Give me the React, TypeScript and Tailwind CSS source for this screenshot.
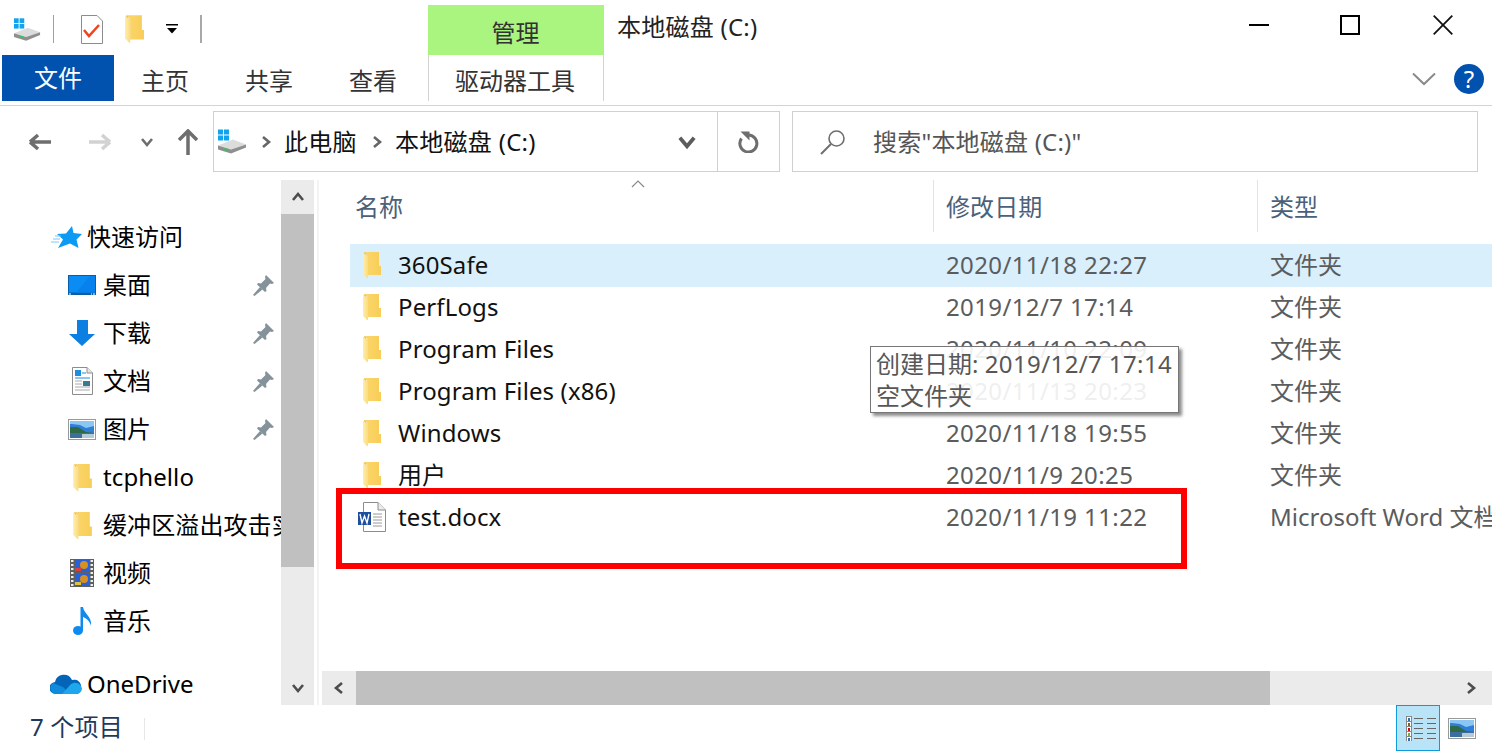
import type { ReactNode } from 'react'

function Folder({ className = 'w-[18px] h-[26px]' }: { className?: string }) {
  return (
    <svg viewBox="0 0 18 26" className={className}>
      <defs>
        <linearGradient id="folderFlap" x1="0" x2="1" y1="0" y2="0">
          <stop offset="0" stopColor="#ffeeaa" />
          <stop offset="1" stopColor="#fbdc7e" />
        </linearGradient>
        <linearGradient id="folderBody" x1="0" x2="1" y1="0" y2="0">
          <stop offset="0" stopColor="#fbd76c" />
          <stop offset="1" stopColor="#f8cd58" />
        </linearGradient>
      </defs>
      <path d="M1 0 H16 V14 H18 V23 H5 V4 Z" fill="url(#folderBody)" />
      <path d="M1 0 L3 1.500 V3 L5 4 V23 H4 Z" fill="#e9bd4b" />
      <path d="M0 0.500 L5 4.500 V26 L4 26 L0 22 Z" fill="url(#folderFlap)" />
    </svg>
  )
}

function Drive({ className = 'w-[29px] h-[24px]' }: { className?: string }) {
  return (
    <svg viewBox="0 0 29 24" className={className}>
      <rect x="0" y="0" width="5" height="5" fill="#10a4ef" />
      <rect x="6" y="0" width="5" height="5" fill="#10a4ef" />
      <rect x="0" y="6" width="5" height="5" fill="#10a4ef" />
      <rect x="6" y="6" width="5" height="5" fill="#10a4ef" />
      <path d="M0 16 L15 10 L28 15 L13 20 Z" fill="#dcdcdc" />
      <path d="M0 16 L13 20 L28 15 L28 18 L13 24 L0 20 Z" fill="#8f8f8f" />
      <rect x="6" y="19" width="4" height="2" fill="#36c45b" />
    </svg>
  )
}

function Pin() {
  return (
    <svg viewBox="0 0 21 21" className="w-[21px] h-[21px]">
      <path d="M13 0 L21 8 L19 9 L17 8.500 L13 13 L13.500 16 L12 17 L4 9.500 L5 8 L8 8.500 L12.500 4 L12 2 Z" fill="#84929b" />
      <path d="M7 12 L9.500 14.500 L1.500 21 L0 20 Z" fill="#84929b" />
    </svg>
  )
}

function Landscape({ className }: { className: string }) {
  return (
    <svg viewBox="0 0 28 21" className={className}>
      <rect x="0.500" y="0.500" width="27" height="20" fill="#fff" stroke="#999" />
      <rect x="2" y="2" width="24" height="17" fill="#2f7fd8" />
      <path d="M2 2 H26 V7 L18 9 L12 6 L4 5 L2 5 Z" fill="#8cc7f3" />
      <path d="M2 8 L10 8 L18 13 L26 14 V15 H2 Z" fill="#2f6a48" />
      <rect x="2" y="14" width="24" height="5" fill="#3c6f9e" />
      <rect x="14" y="15" width="12" height="4" fill="#b5c9d6" />
    </svg>
  )
}

const quickIcons: Record<string, ReactNode> = {
  desktop: (
    <svg viewBox="0 0 28 20" className="w-[28px] h-[20px]">
      <rect width="28" height="20" fill="#0a5ea8" />
      <rect x="1" y="1" width="26" height="16.500" fill="#0a8cf5" />
      <path d="M8 17.500 L22 1 H27 V17.500 Z" fill="#0781ee" />
      <path d="M1 19 H3 M23 19 H24 M25 19 H27" stroke="#fff" />
    </svg>
  ),
  download: (
    <svg viewBox="0 0 26 26" className="w-[26px] h-[26px]">
      <path d="M8 0 H19 V14 H26 L13 26 L0 14 H8 Z" fill="#0c7fe2" />
    </svg>
  ),
  doc: (
    <svg viewBox="0 0 21 28" className="w-[21px] h-[28px]">
      <path d="M0.500 0.500 H15 L20.500 6 V27.500 H0.500 Z" fill="#fff" stroke="#8d8d8d" />
      <path d="M15 0.500 V6 H20.500" fill="#e6e6e6" stroke="#8d8d8d" />
      <rect x="3" y="3" width="6" height="6" fill="#1b8ee0" />
      <path d="M10 6 H14 M3 11 H18" stroke="#1b8ee0" />
      <path d="M3 14 H10 M3 17 H10 M3 20 H18 M3 23 H18" stroke="#aaa" />
      <rect x="11" y="14" width="7" height="5" fill="#3d7a8f" />
    </svg>
  ),
  pictures: <Landscape className="w-[28px] h-[21px]" />,
  folder: <Folder className="w-[19px] h-[27px]" />,
  video: (
    <svg viewBox="0 0 24 28" className="w-[24px] h-[28px]">
      <rect width="24" height="28" fill="#5f5f5f" />
      <rect x="5" y="1" width="14" height="12" fill="#2860d8" />
      <rect x="5" y="15" width="14" height="12" fill="#2860d8" />
      <circle cx="14" cy="6" r="4" fill="#d89020" />
      <circle cx="14" cy="20" r="4" fill="#d89020" />
      <rect x="5" y="9" width="6" height="3" fill="#d84040" />
      <rect x="5" y="23" width="6" height="3" fill="#e0c040" />
      <path d="M1 2 H3.500 M1 6 H3.500 M1 10 H3.500 M1 14 H3.500 M1 18 H3.500 M1 22 H3.500 M1 26 H3.500 M20.500 2 H23 M20.500 6 H23 M20.500 10 H23 M20.500 14 H23 M20.500 18 H23 M20.500 22 H23 M20.500 26 H23" stroke="#eee" strokeWidth="2" />
    </svg>
  ),
  music: (
    <svg viewBox="0 0 19 28" className="w-[19px] h-[28px]">
      <ellipse cx="5" cy="23.500" rx="5" ry="4.500" fill="#0f8bef" />
      <path d="M7.500 0 H10 C11 7 19 9 18 19 C17 14 13 11 10 10 V24 H7.500 Z" fill="#0f8bef" />
    </svg>
  ),
}

const quickItems = [
  { key: 'desktop', label: '桌面', pinned: true },
  { key: 'download', label: '下载', pinned: true },
  { key: 'doc', label: '文档', pinned: true },
  { key: 'pictures', label: '图片', pinned: true },
  { key: 'folder', label: 'tcphello', pinned: false },
  { key: 'folder', label: '缓冲区溢出攻击实验', pinned: false },
  { key: 'video', label: '视频', pinned: false },
  { key: 'music', label: '音乐', pinned: false },
]

const files = [
  { name: '360Safe', date: '2020/11/18 22:27', type: '文件夹' },
  { name: 'PerfLogs', date: '2019/12/7 17:14', type: '文件夹' },
  { name: 'Program Files', date: '2020/11/10 22:09', type: '文件夹' },
  { name: 'Program Files (x86)', date: '2020/11/13 20:23', type: '文件夹' },
  { name: 'Windows', date: '2020/11/18 19:55', type: '文件夹' },
  { name: '用户', date: '2020/11/9 20:25', type: '文件夹' },
  { name: 'test.docx', date: '2020/11/19 11:22', type: 'Microsoft Word 文档' },
]

function Chevron({ dir, className = 'w-[14px] h-[14px]', color = '#4d4d4d' }: { dir: 'up' | 'down' | 'left' | 'right'; className?: string; color?: string }) {
  const d = {
    up: 'M2 10 L7 4 L12 10',
    down: 'M2 4 L7 10 L12 4',
    left: 'M10 2 L4 7 L10 12',
    right: 'M4 2 L10 7 L4 12',
  }[dir]
  return (
    <svg viewBox="0 0 14 14" className={className}>
      <path d={d} fill="none" stroke={color} strokeWidth="2.600" />
    </svg>
  )
}

function RibbonTab({ label, width }: { label: string; width: string }) {
  return <div className={`${width} h-[46px] pt-[5px] flex items-center justify-center text-[#333]`}>{label}</div>
}

export default function App() {
  return (
    <div className="relative w-[1492px] h-[752px] overflow-hidden bg-white text-[24px] leading-[32px] text-black font-['Noto_Sans','Noto_Sans_CJK_SC',sans-serif]">
      {/* Title row */}
      <div className="h-[55px] flex">
        <div className="w-[428px] flex items-center pl-[14px] pt-[3px]">
          <Drive className="w-[27px] h-[23px]" />
          <div className="ml-[12px] w-[1px] h-[28px] bg-[#a0a0a0]" />
          <svg viewBox="0 0 22 29" className="ml-[27px] w-[22px] h-[29px]">
            <path d="M0.500 0.500 H16 L21.500 6 V28.500 H0.500 Z" fill="#fff" stroke="#8d8d8d" />
            <path d="M3 15 L8 21 L18 10" fill="none" stroke="#f0441c" strokeWidth="2.500" />
          </svg>
          <Folder className="ml-[22px] w-[19px] h-[28px]" />
          <svg viewBox="0 0 12 10" className="ml-[22px] w-[12px] h-[10px]">
            <rect width="12" height="1.500" />
            <path d="M1 4 H11 L6 9.500 Z" />
          </svg>
          <div className="ml-[22px] w-[2px] h-[28px] bg-[#a8a8a8]" />
        </div>
        <div className="mt-[5px] w-[176px] bg-[#a9f580] flex items-center justify-center text-[#333] pt-[6px] pr-[1px]">管理</div>
        <div className="ml-[13px] mt-[5px] h-[44px] flex items-center text-[#222] tracking-[0.25px]">本地磁盘 (C:)</div>
        <div className="ml-auto flex items-center h-[50px] pr-[39px]">
          <div className="w-[20px] h-[2px] bg-black" />
          <div className="ml-[71px] w-[20px] h-[20px] border-2 border-black" />
          <svg viewBox="0 0 20 20" className="ml-[73px] w-[20px] h-[20px]">
            <path d="M0.700 0.700 L19.300 19.300 M19.300 0.700 L0.700 19.300" stroke="#111" strokeWidth="1.800" />
          </svg>
        </div>
      </div>

      {/* Ribbon tabs */}
      <div className="h-[51px] flex border-b border-[#d4d4d4] pl-[2px]">
        <div className="w-[112px] h-[46px] bg-[#0151ae] text-white flex items-center justify-center">文件</div>
        <RibbonTab label="主页" width="w-[102px]" />
        <RibbonTab label="共享" width="w-[106px]" />
        <RibbonTab label="查看" width="w-[102px]" />
        <div className="ml-[4px] w-[176px] h-[46px] pt-[5px] pr-[2px] border-x border-[#d4d4d4] flex items-center justify-center text-[#333]">驱动器工具</div>
        <div className="ml-auto h-[46px] flex items-center pr-[8px] pt-[2px]">
          <svg viewBox="0 0 24 14" className="w-[24px] h-[14px]">
            <path d="M1 1.500 L12 12 L23 1.500" fill="none" stroke="#8a8a8a" strokeWidth="2" />
          </svg>
          <div className="ml-[18px] w-[30px] h-[30px] rounded-full bg-[#0151ae] text-white flex items-center justify-center text-[24px]">?</div>
        </div>
      </div>

      {/* Address row */}
      <div className="h-[74px] flex pt-[5px] pl-[29px]">
        <div className="w-[184px] h-[61px] flex items-center">
          <svg viewBox="0 0 24 20" className="w-[24px] h-[20px]">
            <path d="M1 10 H22 M1 10 L9 3 M1 10 L9 17" fill="none" stroke="#6e6e6e" strokeWidth="3.500" />
          </svg>
          <svg viewBox="0 0 24 20" className="ml-[34px] w-[24px] h-[20px]">
            <path d="M2 10 H23 M23 10 L15 3 M23 10 L15 17" fill="none" stroke="#d2d2d2" strokeWidth="3.500" />
          </svg>
          <Chevron dir="down" className="ml-[29px] w-[14px] h-[14px]" color="#6e6e6e" />
          <svg viewBox="0 0 20 26" className="ml-[24px] w-[20px] h-[26px]">
            <path d="M10 26 V3 M1 11 L10 2 L19 11" fill="none" stroke="#6e6e6e" strokeWidth="3.500" />
          </svg>
        </div>
        <div className="w-[567px] h-[61px] border border-[#d0d0d0] flex items-center">
          <Drive className="ml-[4px] w-[29px] h-[25px]" />
          <Chevron dir="right" className="ml-[12px] w-[14px] h-[14px]" color="#666" />
          <span className="ml-[11px] pt-[1px] text-[#111] tracking-[0.3px]">此电脑</span>
          <Chevron dir="right" className="ml-[13px] w-[14px] h-[14px]" color="#666" />
          <span className="ml-[11px] pt-[1px] text-[#111] tracking-[0.3px]">本地磁盘 (C:)</span>
          <Chevron dir="down" className="ml-auto mr-[20px] w-[20px] h-[20px]" color="#5c5c5c" />
          <div className="w-[1px] h-full bg-[#d0d0d0]" />
          <svg viewBox="0 0 21 22" className="mx-[20px] w-[21px] h-[22px]">
            <path d="M10.500 4 A8.500 8.500 0 1 1 3.500 7.500" fill="none" stroke="#6e6e6e" strokeWidth="3" />
            <path d="M2.500 0.500 H11.500 V9.500 Z" fill="#6e6e6e" />
          </svg>
        </div>
        <div className="ml-[12px] w-[686px] h-[61px] border border-[#d0d0d0] flex items-center pl-[27px] text-[#555]">
          <svg viewBox="0 0 26 26" className="w-[26px] h-[26px]">
            <circle cx="16.500" cy="9.500" r="7.500" fill="none" stroke="#6e6e6e" strokeWidth="1.600" />
            <path d="M11 15 L1 25" stroke="#6e6e6e" strokeWidth="2" />
          </svg>
          <span className="ml-[27px] pt-[1px] tracking-[0.2px]">搜索"本地磁盘 (C:)"</span>
        </div>
      </div>

      {/* Main */}
      <div className="h-[525px] flex">
        <div className="w-[281px] h-full overflow-hidden pt-[33px] whitespace-nowrap">
          <div className="h-[48px] flex items-center pl-[51px]">
            <svg viewBox="0 0 32 24" className="w-[32px] h-[24px]">
              <path d="M21 1 L22.500 8 L31 9 L25.500 14.500 L27.500 23 L19 18.500 L7 23 L12 14.500 L6 9 L15 8.500 Z" fill="#0d9af5" />
              <path d="M0 17 H8 M2 14 H9 M4 11 H10" stroke="#7cc7fa" />
            </svg>
            <span className="ml-[4px]">快速访问</span>
          </div>
          {quickItems.map((item) => (
            <div key={item.label} className="h-[48px] flex items-center pl-[68px]">
              <div className="w-[28px] shrink-0 flex justify-center">{quickIcons[item.key]}</div>
              <span className={`ml-[7px] shrink-0 overflow-hidden tracking-[0.1px] ${item.pinned ? 'w-[150px]' : 'w-[178px]'}`}>{item.label}</span>
              {item.pinned && <Pin />}
            </div>
          ))}
          <div className="mt-[15px] h-[48px] flex items-center pl-[50px]">
            <svg viewBox="0 0 32 21" className="w-[32px] h-[21px]">
              <path d="M6 20 A6 6 0 0 1 5 8 A9 9 0 0 1 22 6 A7 7 0 0 1 31 14 Q30 20 26 20 Z" fill="#0364b8" />
              <path d="M6 20 A6 6 0 0 1 3 9 L13 13 L20 20 Z" fill="#0f8bdc" />
              <path d="M12 20 L21 10 A7 7 0 0 1 32 15 Q31 20 26 20 Z" fill="#1fa7ee" />
            </svg>
            <span className="ml-[5px]">OneDrive</span>
          </div>
        </div>

        {/* Nav scrollbar */}
        <div className="w-[33px] h-full bg-[#ebebeb] flex flex-col">
          <div className="h-[34px] flex items-center justify-center">
            <Chevron dir="up" />
          </div>
          <div className="h-[353px] bg-[#c0c0c0]" />
          <div className="mt-auto h-[35px] flex items-center justify-center">
            <Chevron dir="down" />
          </div>
        </div>
        <div className="ml-[3px] w-[2px] h-full bg-[#f3f3f3]" />

        {/* File pane */}
        <div className="ml-[3px] flex-1 min-w-0 flex flex-col">
          <div className="relative h-[52px] flex text-[#4c607a]">
            <div className="w-[612px] border-r border-[#e2e2e2] pl-[33px] pt-[2px] flex items-center">名称</div>
            <div className="w-[324px] border-r border-[#e2e2e2] pl-[12px] pt-[2px] flex items-center tracking-[0.1px]">修改日期</div>
            <div className="pl-[12px] pt-[2px] flex items-center">类型</div>
            <svg viewBox="0 0 14 8" className="absolute left-[309px] top-0 w-[14px] h-[8px]">
              <path d="M1 7 L7 1 L13 7" fill="none" stroke="#8a8a8a" strokeWidth="1.200" />
            </svg>
          </div>
          <div className="flex-1 min-h-0 pt-[12px] pl-[28px] whitespace-nowrap overflow-hidden">
            {files.map((file, i) => (
              <div key={file.name} className={`flex items-center ${i === 0 ? 'h-[43px] -mb-[1px] pb-[1px] bg-[#d9effc]' : 'h-[42px]'}`}>
                <div className="w-[48px] shrink-0 pl-[13px]">
                  {file.type === '文件夹' ? (
                    <Folder />
                  ) : (
                    <svg viewBox="0 0 28 30" className="w-[28px] h-[30px] -ml-[5px]">
                      <path d="M5.500 0.500 H20 L27.500 8 V29.500 H5.500 Z" fill="#fff" stroke="#8d8d8d" />
                      <path d="M20 0.500 V8 H27.500" fill="#ececec" stroke="#8d8d8d" />
                      <path d="M15 12 H24 M15 15 H24 M15 18 H24 M15 21 H24 M15 24 H24" stroke="#9a9a9a" />
                      <rect x="0" y="10" width="13" height="13" fill="#1e4f9f" />
                      <path d="M2 12 L4 21 L6.500 14 L9 21 L11 12" fill="none" stroke="#fff" strokeWidth="1.400" />
                    </svg>
                  )}
                </div>
                <div className="w-[548px] shrink-0 text-[#111] tracking-[0.12px]">{file.name}</div>
                <div className="w-[324px] shrink-0 text-[#5c5c5c] tracking-[0.38px]">{file.date}</div>
                <div className="text-[#5c5c5c]">{file.type}</div>
              </div>
            ))}
          </div>
          <div className="h-[34px] bg-[#ebebeb] flex items-center">
            <div className="w-[34px] flex justify-center">
              <Chevron dir="left" />
            </div>
            <div className="w-[914px] h-full bg-[#c0c0c0]" />
            <div className="ml-auto w-[42px] flex justify-center">
              <Chevron dir="right" />
            </div>
          </div>
        </div>
      </div>

      {/* Status bar */}
      <div className="h-[47px] flex items-center pl-[30px] text-[#1e395b]">
        <span className="pb-[3px] tracking-[0.2px]">7 个项目</span>
        <div className="ml-[21px] w-[1px] h-[22px] bg-[#e6e6e6]" />
        <div className="ml-auto h-[46px] w-[44px] -mt-[1px] border border-[#0d9bdc] bg-[#b9e3f6] flex flex-col justify-center pl-[9px]">
          {['#2a6fb0', '#8a5a20', '#c01010', '#7ab030', '#2a6fb0'].map((c, i) => (
            <div key={i} className="flex items-center gap-[2px] h-[5px]">
              <div className="w-[6px] h-[5px] border-x border-t border-[#888] bg-white px-[1px] pt-[1px]">
                <div className="w-full h-full" style={{ background: c }} />
              </div>
              <div className="w-[9px] h-[1px] bg-[#666]" />
              <div className="ml-[2px] w-[9px] h-[1px] bg-[#666]" />
            </div>
          ))}
        </div>
        <Landscape className="ml-[8px] mr-[16px] w-[28px] h-[21px]" />
      </div>

      {/* Tooltip */}
      <div className="absolute left-[870px] top-[346px] w-[309px] h-[67px] border border-[#767676] bg-white/90 shadow-[3px_3px_3px_rgba(0,0,0,0.45)] px-[5px] leading-[32px] pt-[1px] text-[#575757] whitespace-nowrap">
        <div>
          创建日期: <span className="tracking-[0.4px]">2019/12/7 17:14</span>
        </div>
        <div>空文件夹</div>
      </div>

      {/* Annotation box */}
      <div className="absolute left-[336px] top-[488px] w-[851px] h-[81px] border-[6px] border-[#ff0000]" />
    </div>
  )
}
